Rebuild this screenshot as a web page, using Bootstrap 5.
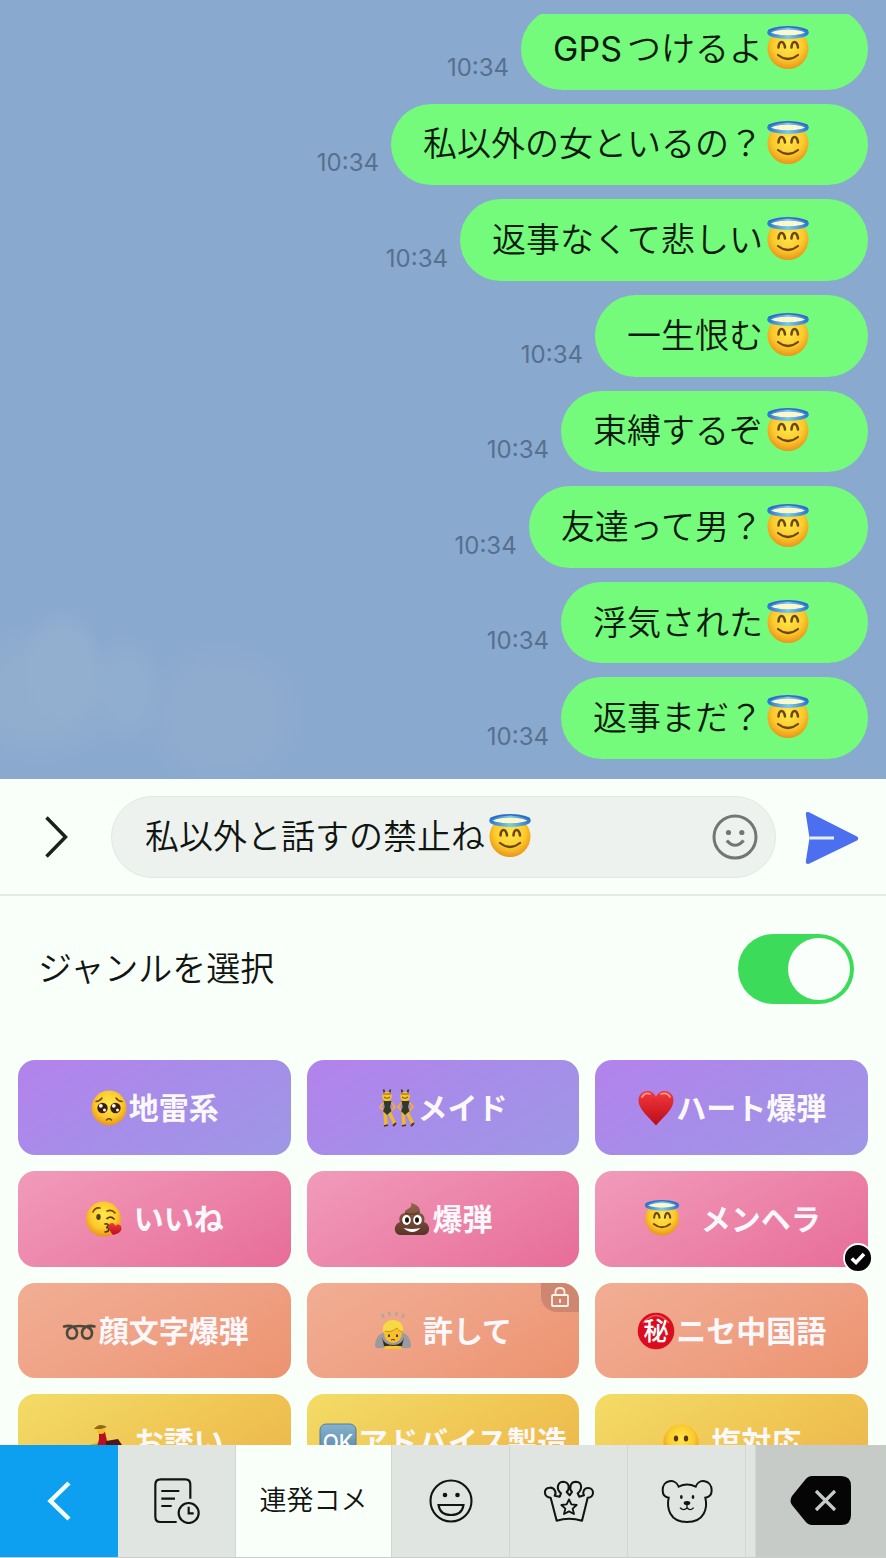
<!DOCTYPE html>
<html lang="ja">
<head>
<meta charset="utf-8">
<meta name="viewport" content="width=device-width, initial-scale=1">
<title>連発コメ</title>
<link href="https://cdn.jsdelivr.net/npm/bootstrap@5.3.0/dist/css/bootstrap.min.css" rel="stylesheet">
<style>
  :root { --paper: #f9fff9; --ink: #101512; }
  body { font-family: Inter, "Noto Sans CJK JP", sans-serif; background: var(--paper); color: var(--ink); }
  button { font-family: inherit; }
  svg { display: block; flex: none; }

  /* chat */
  .chat {
    height: 50vh; padding: 14px 18px 20px;
    background:
      radial-gradient(ellipse 44px 60px at 62px 668px, #92afd0 60%, transparent),
      radial-gradient(ellipse 90px 72px at 40px 694px, #91aecf 50%, transparent),
      radial-gradient(ellipse 40px 56px at 126px 690px, #90aecf 50%, transparent),
      radial-gradient(ellipse 82px 76px at 222px 716px, #8faccf 60%, transparent),
      #8aa9ce;
  }
  .chat-log { display: grid; grid-auto-rows: 1fr; gap: 14px; height: calc(100% + 6px); }
  .bubble { background: #74fb7b; border-radius: 41px; padding: 0 58px 0 32px; font-size: 34px; font-weight: 350; line-height: 48px; color: #0a1a0c; }
  .latin { font-weight: 400; margin-right: 5px; }
  .stamp { font-size: 24px; line-height: 28px; color: #56708f; margin: 0 12px 8px 0; }
  .face { width: 44px; height: 46px; margin-left: 3px; }

  /* composer */
  .composer { height: 117px; padding: 0 27px 0 45px; border-bottom: 2px solid #e6ebe7; }
  .field { height: 82px; margin: 0 29px 0 43px; padding: 0 17px 0 33px; border: 1px solid #e3e8e4; border-radius: 41px; background: #eef2ee; }
  .field input { width: 340px; height: 50px; border: 0; padding: 0; background: transparent; font-size: 34px; font-weight: 350; color: var(--ink); outline: 0; }
  .bare { border: 0; padding: 0; background: transparent; }

  /* genre picker */
  .genre-head { padding: 38px 32px 56px 38px; font-size: 34px; font-weight: 350; line-height: 50px; }
  .genre-head .form-check-input {
    width: 116px; height: 70px; border: 0; background-color: #3cdc5a; background-size: 70px 62px;
    background-image: url("data:image/svg+xml,%3csvg xmlns='http://www.w3.org/2000/svg' viewBox='0 0 70 62'%3e%3ccircle cx='35' cy='31' r='31' fill='%23fbfffb'/%3e%3c/svg%3e") !important;
    background-position: right center;
  }
  .genres { padding: 0 18px; min-height: 0; }
  .tile { aspect-ratio: 20 / 7; border: 0; border-radius: 17px; font-size: 30px; font-weight: 700; line-height: 40px; color: #fbf8fb; }
  .tile svg { width: 38px; height: 38px; margin-right: 1px; }
  .gap-s svg { margin-right: 11px; }
  .gap-l svg { margin-right: 20px; }
  .violet { background: linear-gradient(150deg, #b184ec 10%, #a68de9 50%, #9f97e6); }
  .pink { background: linear-gradient(150deg, #f19bba, #ec82a8 55%, #e76d99); }
  .coral { background: linear-gradient(150deg, #f1ae93, #efa083 55%, #ec936f); }
  .gold { background: linear-gradient(150deg, #f3dc67, #f0c755 50%, #ebb349); }
  .picked { right: -5px; bottom: -6px; z-index: 1; }
  .picked svg { width: 30px; height: 30px; margin: 0; }
  .lock { top: 0; right: 0; width: 38px; height: 29px; border-radius: 0 17px 0 16px; background: #cf8670; }
  .lock svg { width: 20px; height: 22px; margin: 0; }

  /* tab bar */
  .tabs { display: grid; grid-template-columns: 118fr 118fr 156fr 118fr 118fr 118fr 10fr 130fr; height: 113px; background: #e0e5e2; border-bottom: 1px solid #c9cecb; }
  .tabs button, .tabs i { display: grid; place-items: center; border: 0; border-right: 1px solid #d2d7d4; background: transparent; font-size: 27px; font-weight: 350; padding: 0; color: #101512; }
  .tabs .back { background: #0d9ff0; border-color: #0d9ff0; }
  .tabs .now { background: var(--paper); }
  .tabs .erase { background: #c7cbc8; border: 0; }
</style>
</head>
<body>
<svg width="0" height="0" class="position-absolute" aria-hidden="true">
  <defs>
    <radialGradient id="skin" cx=".5" cy=".4" r=".62"><stop offset="0" stop-color="#ffe94e"/><stop offset=".6" stop-color="#fccb2c"/><stop offset="1" stop-color="#e98f17"/></radialGradient>
    <linearGradient id="ring" x1="0" x2="1"><stop offset="0" stop-color="#2d79d6"/><stop offset=".5" stop-color="#7ccbea"/><stop offset="1" stop-color="#2d79d6"/></linearGradient>
    <linearGradient id="blood" x1="0" x2="0" y1="0" y2="1"><stop offset="0" stop-color="#f5383a"/><stop offset="1" stop-color="#b80c1a"/></linearGradient>
    <linearGradient id="brown" x1="0" x2="0" y1="0" y2="1"><stop offset="0" stop-color="#93664e"/><stop offset="1" stop-color="#5b3427"/></linearGradient>
    <linearGradient id="slate" x1="0" x2="0" y1="0" y2="1"><stop offset="0" stop-color="#86b2cd"/><stop offset="1" stop-color="#4d7fa3"/></linearGradient>
    <symbol id="angel" viewBox="0 0 44 46">
      <circle cx="22" cy="22.500" r="20.500" fill="url(#skin)"/>
      <ellipse cx="22" cy="6" rx="16" ry="3.500" fill="#fdf8cc"/>
      <ellipse cx="22" cy="6.500" rx="19" ry="4.600" fill="none" stroke="url(#ring)" stroke-width="3.600"/>
      <path d="M2.500 4.500Q22-3 41.500 4.500" fill="none" stroke="#2f6cc0" stroke-width="1.500"/>
      <path d="M12.500 21.500c.5-7.500 5.500-7.500 6.500 0M25.500 21.500c.5-7.500 5.500-7.500 6.500 0" fill="none" stroke="#6d4512" stroke-width="2.500" stroke-linecap="round"/>
      <path d="M12 29q10 8 20 0" fill="none" stroke="#6d4512" stroke-width="2.200" stroke-linecap="round"/>
    </symbol>
  </defs>
</svg>

<div class="vh-100 d-flex flex-column overflow-hidden">
  <main class="chat flex-shrink-0">
    <div class="h-100 d-flex flex-column justify-content-end overflow-hidden">
      <ol class="chat-log list-unstyled m-0 flex-shrink-0">
        <li class="d-flex justify-content-end align-items-end"><time class="stamp">10:34</time><div class="bubble h-100 d-flex align-items-center"><span class="latin">GPS</span><span>つけるよ</span><svg class="face" role="img" aria-label="天使"><use href="#angel"/></svg></div></li>
        <li class="d-flex justify-content-end align-items-end"><time class="stamp">10:34</time><div class="bubble h-100 d-flex align-items-center"><span>私以外の女といるの？</span><svg class="face" role="img" aria-label="天使"><use href="#angel"/></svg></div></li>
        <li class="d-flex justify-content-end align-items-end"><time class="stamp">10:34</time><div class="bubble h-100 d-flex align-items-center"><span>返事なくて悲しい</span><svg class="face" role="img" aria-label="天使"><use href="#angel"/></svg></div></li>
        <li class="d-flex justify-content-end align-items-end"><time class="stamp">10:34</time><div class="bubble h-100 d-flex align-items-center"><span>一生恨む</span><svg class="face" role="img" aria-label="天使"><use href="#angel"/></svg></div></li>
        <li class="d-flex justify-content-end align-items-end"><time class="stamp">10:34</time><div class="bubble h-100 d-flex align-items-center"><span>束縛するぞ</span><svg class="face" role="img" aria-label="天使"><use href="#angel"/></svg></div></li>
        <li class="d-flex justify-content-end align-items-end"><time class="stamp">10:34</time><div class="bubble h-100 d-flex align-items-center"><span>友達って男？</span><svg class="face" role="img" aria-label="天使"><use href="#angel"/></svg></div></li>
        <li class="d-flex justify-content-end align-items-end"><time class="stamp">10:34</time><div class="bubble h-100 d-flex align-items-center"><span>浮気された</span><svg class="face" role="img" aria-label="天使"><use href="#angel"/></svg></div></li>
        <li class="d-flex justify-content-end align-items-end"><time class="stamp">10:34</time><div class="bubble h-100 d-flex align-items-center"><span>返事まだ？</span><svg class="face" role="img" aria-label="天使"><use href="#angel"/></svg></div></li>
      </ol>
    </div>
  </main>

  <form class="composer d-flex align-items-center flex-shrink-0">
    <button type="button" class="bare" aria-label="開く"><svg width="23" height="42" viewBox="0 0 23 42" fill="none" stroke="#1b201d" stroke-width="3.500"><path d="M1.500 1.500 20.500 21 1.500 40.500"/></svg></button>
    <div class="field d-flex align-items-center flex-grow-1">
      <input type="text" aria-label="メッセージ" value="私以外と話すの禁止ね">
      <svg class="face" role="img" aria-label="天使"><use href="#angel"/></svg>
      <button type="button" class="bare ms-auto" aria-label="スタンプ"><svg width="46" height="46" viewBox="0 0 46 46" fill="none" stroke="#737774" stroke-width="3"><circle cx="23" cy="23" r="21"/><circle cx="16.500" cy="18.500" r="2.600" fill="#737774" stroke="none"/><circle cx="29.800" cy="18.500" r="2.600" fill="#737774" stroke="none"/><path d="M14.800 26.500q8.200 9.500 16.800 0" stroke-width="3.200"/></svg></button>
    </div>
    <button type="submit" class="bare" aria-label="送信"><svg width="54" height="56" viewBox="0 -2 54 56"><path d="M3 1Q.7.500.8 3L4.500 27 .8 50.500Q.7 53.500 4 52.800L52 29.500Q54.500 27.500 52 25.500L4 1.200Z" fill="#4b6fee"/><path d="M4.500 27H29" stroke="#e8eefc" stroke-width="3"/></svg></button>
  </form>

  <section class="genre-head d-flex align-items-center justify-content-between flex-shrink-0">
    <label for="genre">ジャンルを選択</label>
    <div class="form-switch p-0"><input class="form-check-input m-0 float-none d-block" type="checkbox" role="switch" id="genre" checked></div>
  </section>

  <section class="genres flex-grow-1 overflow-hidden">
    <div class="row row-cols-3 g-3">
      <div class="col"><button class="tile violet w-100 d-flex align-items-center justify-content-center">
        <svg viewBox="0 0 38 38"><circle cx="19" cy="19" r="17.500" fill="url(#skin)"/><g fill="#3b1d0c"><circle cx="12.500" cy="19" r="5.200"/><circle cx="25.500" cy="19" r="5.200"/></g><g fill="#fff"><circle cx="10.800" cy="16.800" r="1.900"/><circle cx="23.800" cy="16.800" r="1.900"/><circle cx="14.500" cy="21" r="1.500"/><circle cx="27.500" cy="21" r="1.500"/></g><path d="M6 12.500q4-.5 6-3.500M32 12.500q-4-.5-6-3.500M16.500 31q2.500-2.500 5 0" fill="none" stroke="#6d4512" stroke-width="1.500" stroke-linecap="round"/></svg>
        <span>地雷系</span></button></div>
      <div class="col"><button class="tile violet w-100 d-flex align-items-center justify-content-center">
        <svg viewBox="0 0 38 38"><g id="dancer"><path d="M7 5 5.500.5M11 5l1.500-4.500" stroke="#40352a" stroke-width="1.700"/><path d="M6 13 2 18l4 4M13 13l4 5-4 4" fill="none" stroke="#efad35" stroke-width="2"/><path d="m7 23 1 13M11 23l6 12" stroke="#eeb92b" stroke-width="3.500"/><circle cx="9" cy="7.500" r="4.800" fill="#f7c52c"/><path d="M6 8q3 2.500 6 0M5 5h8" fill="none" stroke="#91611b" stroke-width="1.200"/><path d="M5.500 12h8l-1.500 6 1.500 4-4.500 4-4-4 1.700-4Z" fill="#303b27"/><path d="m6 37 4-1M15 37l3-3" stroke="#40352a" stroke-width="1.800"/></g><use href="#dancer" x="18"/></svg>
        <span>メイド</span></button></div>
      <div class="col"><button class="tile violet w-100 d-flex align-items-center justify-content-center">
        <svg viewBox="0 0 38 38"><path d="M19 36.500C13 29 1.500 21 1.500 11.500 1.500 1 15-1.500 19 8 23-1.500 36.500 1 36.500 11.500 36.500 21 25 29 19 36.500Z" fill="url(#blood)"/><path d="M5 8q3-5 8-3M24 5q6-2 9 3" fill="none" stroke="#ff9c92" stroke-width="1.800" stroke-linecap="round"/></svg>
        <span>ハート爆弾</span></button></div>

      <div class="col"><button class="tile pink gap-s w-100 d-flex align-items-center justify-content-center">
        <svg viewBox="0 0 38 38"><circle cx="18.500" cy="19" r="17.500" fill="url(#skin)"/><path d="M8 12q2-5 7-4M22 11q5-2 8 2" fill="none" stroke="#6d4512" stroke-width="1.600" stroke-linecap="round"/><ellipse cx="13.500" cy="17" rx="2.200" ry="3" fill="#5a370f"/><path d="M22 18.500q4-3 7 .5M20 24c4-1 4 3 1 3.500 4 0 4 4-1 4.500" fill="none" stroke="#5a370f" stroke-width="1.700" stroke-linecap="round"/><path d="M28 35c-6-7-5-12-1-12 2 0 3 2 3.500 3 2-3 6-1 6 2 0 4-4 6-8.500 7Z" fill="url(#blood)"/></svg>
        <span>いいね</span></button></div>
      <div class="col"><button class="tile pink w-100 d-flex align-items-center justify-content-center">
        <svg viewBox="0 0 38 38"><path d="M18 3c5 1 10 4 9 10 5 2 5 6 4 9 7 2 7 13-1 13H8c-8 0-8-11-1-13-2-5 1-9 5-9-1-5 8-3 6-10Z" fill="url(#brown)"/><path d="M12 13q8 3 14-1M8 22q5 3 9 2" fill="none" stroke="#51301f" stroke-width="1"/><g fill="#fff"><ellipse cx="13.500" cy="20" rx="4.300" ry="5"/><ellipse cx="24.500" cy="20" rx="4.300" ry="5"/><path d="M10.500 28q9 2 17 0-8 8-17 0Z"/></g><g fill="#22150e"><ellipse cx="14" cy="20" rx="2" ry="2.800"/><ellipse cx="24" cy="20" rx="2" ry="2.800"/></g></svg>
        <span>爆弾</span></button></div>
      <div class="col"><button class="tile pink gap-l w-100 d-flex align-items-center justify-content-center position-relative" aria-pressed="true">
        <svg><use href="#angel"/></svg>
        <span>メンヘラ</span>
        <span class="picked position-absolute"><svg viewBox="0 0 30 30"><circle cx="15" cy="15" r="14" fill="#050505" stroke="#fff" stroke-width="1.800"/><path d="m8.800 15.500 4.200 4 8-8.500" fill="none" stroke="#fff" stroke-width="3.600"/></svg></span></button></div>

      <div class="col"><button class="tile coral w-100 d-flex align-items-center justify-content-center">
        <svg viewBox="0 0 38 38"><path d="M4 14.500C12 12.500 17 16 17 21 17 28.500 7 28.500 7 21 7 15 13 14 19.500 14S32 15 32 21C32 28.500 22 28.500 22 21 22 16 27 12.500 34.500 14.500" fill="none" stroke="#4a4a3c" stroke-width="2.600" stroke-linecap="round"/></svg>
        <span>顔文字爆弾</span></button></div>
      <div class="col"><button class="tile coral gap-s w-100 d-flex align-items-center justify-content-center position-relative">
        <svg viewBox="0 0 38 38"><path d="m8 2 2 4M15 0l1 4M23 0l-1 4M30 2l-2 4" stroke="#b5a69b" stroke-width="2.300"/><path d="M9 21q-7 2-8 12 0 4 6 3h24q6 1 6-3-1-10-8-12Z" fill="#9b9a9f"/><path d="M8 25q2 8 11 8 9 0 11-8l-2 9H10Z" fill="#33291b"/><path d="M10 37q0-4 9-3 9-1 9 3Z" fill="#f7c52c"/><ellipse cx="19" cy="21" rx="9" ry="10" fill="#f9c02e"/><path d="M9 20C6 4 32 4 29 20q-4 0-6-4-6 5-12 3Z" fill="#f7d943"/><path d="M11 19q6 2 12-3 2 4 6 4" fill="none" stroke="#c8921c"/><path d="M15 22.500v2.500M23 22.500v2.500" stroke="#5a370f" stroke-width="2"/><path d="M17 28q2-1 4 0" fill="none" stroke="#5a370f"/></svg>
        <span>許して</span>
        <span class="lock position-absolute d-flex align-items-center justify-content-center"><svg viewBox="0 0 20 22" fill="none" stroke="#fff1e6" stroke-width="1.800"><rect x="2" y="9" width="16" height="11" rx="1"/><path d="M5.500 9V6q0-4 4.500-4t4.500 4v3M10 13v4"/></svg></span></button></div>
      <div class="col"><button class="tile coral w-100 d-flex align-items-center justify-content-center">
        <svg viewBox="0 0 38 38" font-family="Noto Sans CJK JP, sans-serif"><circle cx="19" cy="19" r="18.300" fill="#dc0c20"/><path d="M6 11q13-15 26 0" fill="none" stroke="#ee5a55" stroke-width="1.500"/><text x="19" y="28" text-anchor="middle" font-size="25" font-weight="500" fill="#fff">秘</text></svg>
        <span>ニセ中国語</span></button></div>

      <div class="col"><button class="tile gold gap-s w-100 d-flex align-items-center justify-content-center">
        <svg viewBox="0 0 38 38"><path d="M17 12l-4 9-9 2" fill="none" stroke="#d99b24" stroke-width="2"/><path d="M14 9h6l2 9 7 1 2 7-5 3 2 4-6 4H11l-9-2q10-8 12-18Z" fill="#b9101f"/><path d="m21 18 12-2 4 6-8 5 1 5-9-5Z" fill="#4f1719"/><circle cx="16" cy="7" r="4" fill="#f3bf2c"/><path d="M9 6q5-7 13-2l-6 2Z" fill="#8e681a"/></svg>
        <span>お誘い</span></button></div>
      <div class="col"><button class="tile gold w-100 d-flex align-items-center justify-content-center">
        <svg viewBox="0 0 38 38" font-family="Inter, sans-serif"><rect x="1" y="1" width="36" height="36" rx="6" fill="url(#slate)" stroke="#527c98"/><text x="19" y="27" text-anchor="middle" font-size="21" font-weight="500" fill="#fff">OK</text></svg>
        <span>アドバイス製造</span></button></div>
      <div class="col"><button class="tile gold gap-s w-100 d-flex align-items-center justify-content-center">
        <svg viewBox="0 0 38 38"><circle cx="19" cy="19" r="17.500" fill="url(#skin)"/><g fill="#5a370f"><ellipse cx="14" cy="15.500" rx="2.200" ry="3"/><ellipse cx="24" cy="15.500" rx="2.200" ry="3"/></g></svg>
        <span>塩対応</span></button></div>
    </div>
  </section>

  <nav class="tabs flex-shrink-0">
    <button class="back" aria-label="戻る"><svg width="24" height="40" viewBox="0 0 24 40" fill="none" stroke="#f3fffd" stroke-width="4.500"><path d="M22 2 3.500 20 22 38"/></svg></button>
    <button aria-label="履歴"><svg width="46" height="46" viewBox="464 128 138 138" fill="none" stroke="#101512" stroke-width="6.500"><path d="M532 260H484Q468 260 468 244V148Q468 132 484 132H558Q573 132 573 148V190M486 167H540M486 190H527M486 212H517"/><circle cx="568" cy="233" r="30"/><path d="M568 214V234H583"/></svg></button>
    <button class="now">連発コメ</button>
    <button aria-label="顔"><svg width="46" height="46" viewBox="0 0 46 46" fill="none" stroke="#101512" stroke-width="2.100"><circle cx="23" cy="23" r="20.500"/><circle cx="17" cy="17" r="2.300" fill="#101512" stroke="none"/><circle cx="29.500" cy="17" r="2.300" fill="#101512" stroke="none"/><path d="M10.500 27H35.500Q34 37 23 37T10.500 27Z"/></svg></button>
    <button aria-label="王冠"><svg width="52" height="44" viewBox="302 131 156 132" fill="none" stroke="#101512" stroke-width="6.200" stroke-linejoin="round"><path d="M343 256 325 187C303 187 302 157 322 157 338 156 343 174 337 181L352 184 356 174C339 160 347 139 363 139 382 140 383 161 373 170L382 180 389 170C379 159 384 139 401 139 420 140 421 162 406 174L411 184 425 180C419 170 426 156 438 158 457 159 457 187 436 187L419 256Q380 245 343 256Z"/><path d="m380 192 7 15 16 2-12 11 4 16-15-8-15 8 4-16-12-11 16-2Z" stroke-width="5.500"/></svg></button>
    <button aria-label="くま"><svg width="52" height="44" viewBox="657 131 156 132" fill="none" stroke="#101512" stroke-width="6"><path d="M710 154C700 128 661 133 662 165 662 179 670 186 680 187 674 216 681 260 735 260S797 216 790 187C800 186 809 179 809 165 809 133 770 128 761 154Q735 141 710 154Z"/><g fill="#101512" stroke="none"><ellipse cx="718" cy="185" rx="4" ry="6"/><ellipse cx="753" cy="185" rx="4" ry="6"/><ellipse cx="735" cy="203" rx="10" ry="6"/></g><path d="M735 205V220M714 217Q725 228 735 218 746 228 755 217" stroke-width="4"/></svg></button>
    <i></i>
    <button class="erase" aria-label="削除"><svg width="62" height="50" viewBox="0 0 62 50"><path d="M22 0H51Q61 0 61 10V39Q61 49 51 49H22Q18 49 15 45L2 29Q-1 25 2 20L15 4Q18 0 22 0Z" fill="#040504"/><path d="m26 15 19 19M45 15 26 34" stroke="#c7cbc8" stroke-width="3.200"/></svg></button>
  </nav>
</div>
<script src="https://cdn.jsdelivr.net/npm/bootstrap@5.3.0/dist/js/bootstrap.bundle.min.js"></script>
</body>
</html>
